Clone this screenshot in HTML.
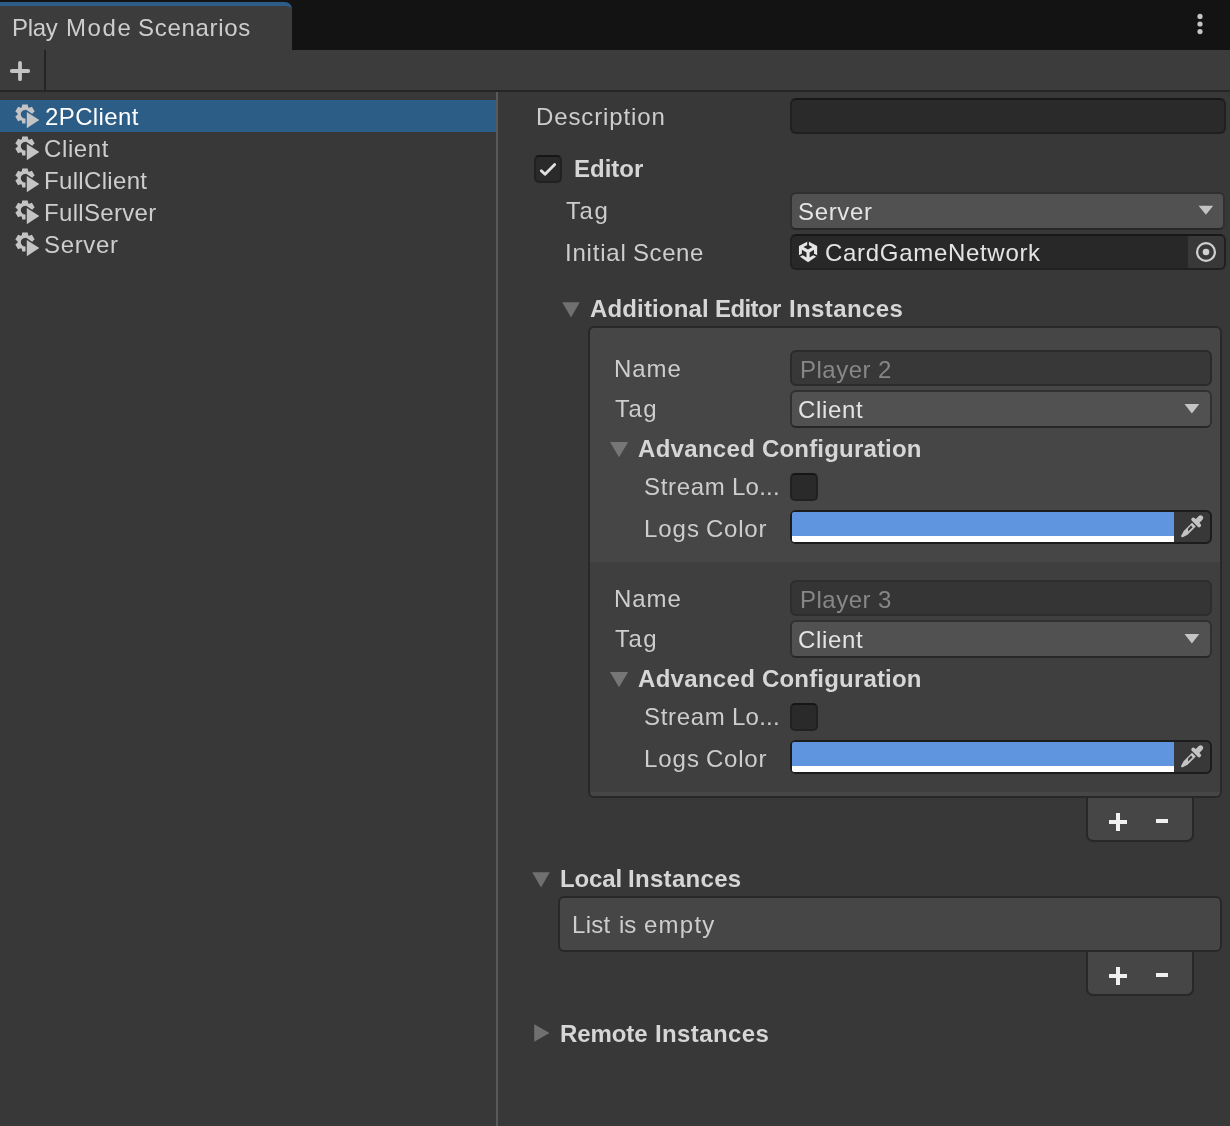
<!DOCTYPE html>
<html><head><meta charset="utf-8"><title>Play Mode Scenarios</title>
<style>
*{box-sizing:border-box;margin:0;padding:0}
html,body{width:1230px;height:1126px;overflow:hidden;background:#383838}
body{position:relative;font-family:"Liberation Sans",sans-serif;font-size:24px;color:#cdcdcd;}
.abs{position:absolute}
.t{position:absolute;display:block;white-space:pre;line-height:32px;height:32px;will-change:transform}
.b{font-weight:bold;color:#d6d6d6}
#hdr{left:0;top:0;width:1230px;height:50px;background:#131313}
#tab{left:0;top:2px;width:292px;height:48px;background:#3c3c3c;border-top:4px solid #2c5d87;border-radius:0 7px 0 0}
#toolbar{left:0;top:50px;width:1230px;height:40px;background:#3c3c3c}
#tbsep{left:44px;top:50px;width:2px;height:40px;background:#242424}
#hline{left:0;top:90px;width:1230px;height:2px;background:#262626}
#vline{left:496px;top:92px;width:2px;height:1034px;background:#595959}
.row{left:0;width:496px;height:32px}
.sel{background:#2c5d87}
.field{background:#2a2a2a;border:2px solid #202020;border-top-color:#181818;border-radius:6px}
.dis{background:#383838;border:2px solid #2b2b2b;border-radius:6px}
.dd{background:#515151;border:2px solid #303030;border-bottom-color:#272727;border-radius:6px}
.box{background:#464646;border:2px solid #282828;border-radius:6px}
.foot{background:#464646;border:2px solid #282828;border-top:none;border-radius:0 0 7px 7px}
.cb{background:#2a2a2a;border:2px solid #212121;border-top-color:#161616;border-radius:5px;width:28px;height:28px}
.item2{background:#3f3f3f}
svg{position:absolute;overflow:visible}
</style></head>
<body>
<div id="hdr" class="abs"></div>
<div id="tab" class="abs"></div>
<div id="toolbar" class="abs"></div>
<div id="tbsep" class="abs"></div>
<div id="hline" class="abs"></div>
<div id="vline" class="abs"></div>
<svg style="left:1190px;top:8px" width="20" height="32"><circle cx="10" cy="8.4" r="2.6" fill="#c4c4c4"/><circle cx="10" cy="16" r="2.6" fill="#c4c4c4"/><circle cx="10" cy="23.6" r="2.6" fill="#c4c4c4"/></svg>
<svg style="left:0;top:50px" width="44" height="40"><path d="M11.8 21H28.2M20 12.8V29.2" stroke="#c4c4c4" stroke-width="3.8" stroke-linecap="round" fill="none"/></svg>
<div class="g"><span class="t" style="left:11.8px;top:12.0px;letter-spacing:-0.307px;">Play </span><span class="t" style="left:65.8px;top:12.0px;letter-spacing:1.596px;">Mode </span><span class="t" style="left:138.0px;top:12.0px;letter-spacing:0.685px;">Scenarios</span></div>
<div class="abs row sel" style="top:100px"></div>
<svg style="left:0;top:100px" width="44" height="32"><path fill-rule="evenodd" fill="#c4c4c4" d="M28.17 7.20 L27.76 4.39 L22.24 4.39 L21.83 7.20 L20.70 7.86 L18.05 6.81 L15.30 11.58 L17.53 13.35 L17.53 14.65 L15.30 16.42 L18.05 21.19 L20.70 20.14 L21.83 20.80 L22.24 23.61 L27.76 23.61 L28.17 20.80 L29.30 20.14 L31.95 21.19 L34.70 16.42 L32.47 14.65 L32.47 13.35 L34.70 11.58 L31.95 6.81 L29.30 7.86Z M29.2 14.2a4.2 4.2 0 1 0 -8.4 0a4.2 4.2 0 1 0 8.4 0Z"/><path d="M26.8 11.9L39.3 20.1L26.8 28.2Z" fill="#c4c4c4" stroke="#2c5d87" stroke-width="2.6" paint-order="stroke" stroke-linejoin="miter"/></svg>
<div class="g"><span class="t" style="left:44.6px;top:101.0px;letter-spacing:0.393px;color:#fff;">2PClient</span></div>
<div class="abs row" style="top:132px"></div>
<svg style="left:0;top:132px" width="44" height="32"><path fill-rule="evenodd" fill="#c4c4c4" d="M28.17 7.20 L27.76 4.39 L22.24 4.39 L21.83 7.20 L20.70 7.86 L18.05 6.81 L15.30 11.58 L17.53 13.35 L17.53 14.65 L15.30 16.42 L18.05 21.19 L20.70 20.14 L21.83 20.80 L22.24 23.61 L27.76 23.61 L28.17 20.80 L29.30 20.14 L31.95 21.19 L34.70 16.42 L32.47 14.65 L32.47 13.35 L34.70 11.58 L31.95 6.81 L29.30 7.86Z M29.2 14.2a4.2 4.2 0 1 0 -8.4 0a4.2 4.2 0 1 0 8.4 0Z"/><path d="M26.8 11.9L39.3 20.1L26.8 28.2Z" fill="#c4c4c4" stroke="#383838" stroke-width="2.6" paint-order="stroke" stroke-linejoin="miter"/></svg>
<div class="g"><span class="t" style="left:44.4px;top:133.0px;letter-spacing:0.622px;">Client</span></div>
<div class="abs row" style="top:164px"></div>
<svg style="left:0;top:164px" width="44" height="32"><path fill-rule="evenodd" fill="#c4c4c4" d="M28.17 7.20 L27.76 4.39 L22.24 4.39 L21.83 7.20 L20.70 7.86 L18.05 6.81 L15.30 11.58 L17.53 13.35 L17.53 14.65 L15.30 16.42 L18.05 21.19 L20.70 20.14 L21.83 20.80 L22.24 23.61 L27.76 23.61 L28.17 20.80 L29.30 20.14 L31.95 21.19 L34.70 16.42 L32.47 14.65 L32.47 13.35 L34.70 11.58 L31.95 6.81 L29.30 7.86Z M29.2 14.2a4.2 4.2 0 1 0 -8.4 0a4.2 4.2 0 1 0 8.4 0Z"/><path d="M26.8 11.9L39.3 20.1L26.8 28.2Z" fill="#c4c4c4" stroke="#383838" stroke-width="2.6" paint-order="stroke" stroke-linejoin="miter"/></svg>
<div class="g"><span class="t" style="left:44.0px;top:165.0px;letter-spacing:0.334px;">FullClient</span></div>
<div class="abs row" style="top:196px"></div>
<svg style="left:0;top:196px" width="44" height="32"><path fill-rule="evenodd" fill="#c4c4c4" d="M28.17 7.20 L27.76 4.39 L22.24 4.39 L21.83 7.20 L20.70 7.86 L18.05 6.81 L15.30 11.58 L17.53 13.35 L17.53 14.65 L15.30 16.42 L18.05 21.19 L20.70 20.14 L21.83 20.80 L22.24 23.61 L27.76 23.61 L28.17 20.80 L29.30 20.14 L31.95 21.19 L34.70 16.42 L32.47 14.65 L32.47 13.35 L34.70 11.58 L31.95 6.81 L29.30 7.86Z M29.2 14.2a4.2 4.2 0 1 0 -8.4 0a4.2 4.2 0 1 0 8.4 0Z"/><path d="M26.8 11.9L39.3 20.1L26.8 28.2Z" fill="#c4c4c4" stroke="#383838" stroke-width="2.6" paint-order="stroke" stroke-linejoin="miter"/></svg>
<div class="g"><span class="t" style="left:44.0px;top:197.0px;letter-spacing:0.311px;">FullServer</span></div>
<div class="abs row" style="top:228px"></div>
<svg style="left:0;top:228px" width="44" height="32"><path fill-rule="evenodd" fill="#c4c4c4" d="M28.17 7.20 L27.76 4.39 L22.24 4.39 L21.83 7.20 L20.70 7.86 L18.05 6.81 L15.30 11.58 L17.53 13.35 L17.53 14.65 L15.30 16.42 L18.05 21.19 L20.70 20.14 L21.83 20.80 L22.24 23.61 L27.76 23.61 L28.17 20.80 L29.30 20.14 L31.95 21.19 L34.70 16.42 L32.47 14.65 L32.47 13.35 L34.70 11.58 L31.95 6.81 L29.30 7.86Z M29.2 14.2a4.2 4.2 0 1 0 -8.4 0a4.2 4.2 0 1 0 8.4 0Z"/><path d="M26.8 11.9L39.3 20.1L26.8 28.2Z" fill="#c4c4c4" stroke="#383838" stroke-width="2.6" paint-order="stroke" stroke-linejoin="miter"/></svg>
<div class="g"><span class="t" style="left:44.4px;top:229.0px;letter-spacing:0.663px;">Server</span></div>
<div class="g"><span class="t" style="left:535.6px;top:101.0px;letter-spacing:0.887px;">Description</span></div>
<div class="abs field" style="left:790px;top:98px;width:436px;height:36px"></div>
<div class="abs cb" style="left:534px;top:155px"></div>
<svg style="left:534px;top:155px" width="28" height="28"><path d="M7.3 15.7L11 19.3L20.7 9.5" stroke="#e2e2e2" stroke-width="2.8" fill="none" stroke-linecap="round" stroke-linejoin="round"/></svg>
<div class="g"><span class="t b" style="left:574.0px;top:153.0px;letter-spacing:-0.004px;">Editor</span></div>
<div class="g"><span class="t" style="left:566.1px;top:195.0px;letter-spacing:1.578px;">Tag</span></div>
<div class="abs dd" style="left:790px;top:192px;width:435px;height:38px"></div>
<svg style="left:1198px;top:205px" width="16" height="10"><path d="M0.6 0.8H15.2L7.9 9.8Z" fill="#c4c4c4"/></svg>
<div class="g"><span class="t" style="left:798.0px;top:196.0px;letter-spacing:0.674px;color:#e4e4e4;">Server</span></div>
<div class="g"><span class="t" style="left:565.4px;top:237.0px;letter-spacing:0.784px;">Initial </span><span class="t" style="left:632.8px;top:237.0px;letter-spacing:0.574px;">Scene</span></div>
<div class="abs field" style="left:790px;top:234px;width:436px;height:36px;background:#282828"></div>
<div class="abs" style="left:1188px;top:236px;width:36px;height:32px;background:#383838;border-radius:0 4px 4px 0"></div>
<svg style="left:1188px;top:236px" width="36" height="32"><circle cx="18" cy="16" r="8.9" fill="none" stroke="#d0d0d0" stroke-width="2.2"/><circle cx="18" cy="16" r="3.3" fill="#d0d0d0"/></svg>
<svg style="left:792px;top:236px" width="32" height="32"><path fill="#e6e6e6" d="M16.05 5.25L25.15 9.95V19.9L16.05 26.15L6.96 19.9V9.95Z"/><g fill="#282828"><path d="M11.4 10.9L16.05 8.7L20.4 10.9L16.0 13.5Z"/><path d="M15.2 5H16.9V10H15.2Z"/><path d="M9.9 13.8L14.5 16.5V21.6L9.9 18.8Z"/><path d="M17.6 16.5L22.0 13.8V18.8L17.6 21.6Z"/><path d="M6.4 19.4L10.3 17.6L10.6 19.2L7.2 20.9Z"/><path d="M25.7 19.4L21.6 17.6L21.3 19.2L24.9 20.9Z"/></g></svg>
<div class="g"><span class="t" style="left:825.0px;top:237.0px;letter-spacing:0.694px;color:#e4e4e4;">CardGameNetwork</span></div>
<svg style="left:562px;top:302px" width="18" height="16"><path d="M0.2 0.2H17.8L9 15.6Z" fill="#707070"/></svg>
<div class="g"><span class="t b" style="left:590.1px;top:293.0px;letter-spacing:0.143px;">Additional </span><span class="t b" style="left:715.3px;top:293.0px;letter-spacing:-0.604px;">Editor </span><span class="t b" style="left:788.6px;top:293.0px;letter-spacing:0.376px;">Instances</span></div>
<div class="abs foot" style="left:1086px;top:794px;width:108px;height:48px"></div>
<div class="abs box" style="left:588px;top:326px;width:634px;height:472px"></div>
<div class="abs item2" style="left:590px;top:562px;width:630px;height:230px"></div>
<div class="g"><span class="t" style="left:613.7px;top:353.0px;letter-spacing:0.959px;">Name</span></div>
<div class="abs dis" style="left:790px;top:350px;width:422px;height:36px"></div>
<div class="g"><span class="t" style="left:800.2px;top:354.0px;letter-spacing:0.505px;color:#878787;">Player </span><span class="t" style="left:878.0px;top:354.0px;color:#878787;">2</span></div>
<div class="g"><span class="t" style="left:614.7px;top:393.0px;letter-spacing:1.426px;">Tag</span></div>
<div class="abs dd" style="left:790px;top:390px;width:422px;height:38px"></div>
<svg style="left:1184px;top:404px" width="16" height="10"><path d="M0.5 0H15.3L7.9 9.4Z" fill="#c4c4c4"/></svg>
<div class="g"><span class="t" style="left:798.4px;top:394.0px;letter-spacing:0.662px;color:#e4e4e4;">Client</span></div>
<svg style="left:609px;top:442px" width="20" height="16"><path d="M1 0H19.1L10.05 15.3Z" fill="#767676"/></svg>
<div class="g"><span class="t b" style="left:638.3px;top:433.0px;letter-spacing:0.3px;">Advanced </span><span class="t b" style="left:761.8px;top:433.0px;letter-spacing:0.18px;">Configuration</span></div>
<div class="g"><span class="t" style="left:643.6px;top:471.0px;letter-spacing:0.687px;">Stream </span><span class="t" style="left:731.6px;top:471.0px;letter-spacing:0.233px;">Lo...</span></div>
<div class="abs cb" style="left:790px;top:473px"></div>
<div class="g"><span class="t" style="left:643.6px;top:513.0px;letter-spacing:0.946px;">Logs </span><span class="t" style="left:705.8px;top:513.0px;letter-spacing:0.76px;">Color</span></div>
<div class="abs" style="left:790px;top:510px;width:422px;height:34px;background:#383838;border:2px solid #1c1c1c;border-radius:6px"></div>
<div class="abs" style="left:792px;top:512px;width:382px;height:24px;background:#5f95df;border-radius:2px 0 0 0"></div>
<div class="abs" style="left:792px;top:536px;width:382px;height:6px;background:#fff;border-radius:0 0 0 2px"></div>
<svg style="left:1174px;top:510px" width="36" height="32"><g transform="translate(29,5.5) rotate(45)" fill="#c4c4c4"><rect x="-2.6" y="0.8" width="5.2" height="10" rx="2.6"/><rect x="-6" y="7.8" width="12.2" height="3.9" rx="1.9"/><path d="M-2.7 12.9H2.7V24.5L1.1 29.8Q0 31.2 -1.1 29.8L-2.7 24.5Z"/><path d="M-1.3 15.6H0.9V21.9L-1.3 19.9Z" fill="#383838"/></g></svg>
<div class="g"><span class="t" style="left:613.7px;top:583.0px;letter-spacing:0.957px;">Name</span></div>
<div class="abs dis" style="left:790px;top:580px;width:422px;height:36px;background:#353535;border-color:#2d2d2d"></div>
<div class="g"><span class="t" style="left:800.2px;top:584.0px;letter-spacing:0.506px;color:#878787;">Player </span><span class="t" style="left:878.0px;top:584.0px;color:#878787;">3</span></div>
<div class="g"><span class="t" style="left:614.7px;top:623.0px;letter-spacing:1.428px;">Tag</span></div>
<div class="abs dd" style="left:790px;top:620px;width:422px;height:38px"></div>
<svg style="left:1184px;top:634px" width="16" height="10"><path d="M0.5 0H15.3L7.9 9.4Z" fill="#c4c4c4"/></svg>
<div class="g"><span class="t" style="left:798.4px;top:624.0px;letter-spacing:0.662px;color:#e4e4e4;">Client</span></div>
<svg style="left:609px;top:672px" width="20" height="16"><path d="M1 0H19.1L10.05 15.3Z" fill="#767676"/></svg>
<div class="g"><span class="t b" style="left:638.3px;top:663.0px;letter-spacing:0.3px;">Advanced </span><span class="t b" style="left:761.8px;top:663.0px;letter-spacing:0.18px;">Configuration</span></div>
<div class="g"><span class="t" style="left:643.6px;top:701.0px;letter-spacing:0.687px;">Stream </span><span class="t" style="left:731.6px;top:701.0px;letter-spacing:0.233px;">Lo...</span></div>
<div class="abs cb" style="left:790px;top:703px"></div>
<div class="g"><span class="t" style="left:643.6px;top:743.0px;letter-spacing:0.946px;">Logs </span><span class="t" style="left:705.8px;top:743.0px;letter-spacing:0.76px;">Color</span></div>
<div class="abs" style="left:790px;top:740px;width:422px;height:34px;background:#383838;border:2px solid #1c1c1c;border-radius:6px"></div>
<div class="abs" style="left:792px;top:742px;width:382px;height:24px;background:#5f95df;border-radius:2px 0 0 0"></div>
<div class="abs" style="left:792px;top:766px;width:382px;height:6px;background:#fff;border-radius:0 0 0 2px"></div>
<svg style="left:1174px;top:740px" width="36" height="32"><g transform="translate(29,5.5) rotate(45)" fill="#c4c4c4"><rect x="-2.6" y="0.8" width="5.2" height="10" rx="2.6"/><rect x="-6" y="7.8" width="12.2" height="3.9" rx="1.9"/><path d="M-2.7 12.9H2.7V24.5L1.1 29.8Q0 31.2 -1.1 29.8L-2.7 24.5Z"/><path d="M-1.3 15.6H0.9V21.9L-1.3 19.9Z" fill="#383838"/></g></svg>
<svg style="left:1086px;top:798px" width="108" height="44"><path d="M23 22h18v4h-18zM30 15h4v18h-4z" fill="#f0f0f0"/><path d="M70 21h12v4h-12z" fill="#f0f0f0"/></svg>
<svg style="left:532px;top:872px" width="18" height="16"><path d="M0.2 0.2H17.8L9 15.6Z" fill="#707070"/></svg>
<div class="g"><span class="t b" style="left:560.2px;top:863.0px;letter-spacing:-0.112px;">Local </span><span class="t b" style="left:628.0px;top:863.0px;letter-spacing:0.31px;">Instances</span></div>
<div class="abs foot" style="left:1086px;top:948px;width:108px;height:48px"></div>
<div class="abs box" style="left:558px;top:896px;width:664px;height:56px"></div>
<div class="g"><span class="t" style="left:571.8px;top:909.0px;letter-spacing:0.294px;">List </span><span class="t" style="left:619.0px;top:909.0px;letter-spacing:-0.162px;">is </span><span class="t" style="left:644.2px;top:909.0px;letter-spacing:1.246px;">empty</span></div>
<svg style="left:1086px;top:952px" width="108" height="44"><path d="M23 22h18v4h-18zM30 15h4v18h-4z" fill="#f0f0f0"/><path d="M70 21h12v4h-12z" fill="#f0f0f0"/></svg>
<svg style="left:534px;top:1024px" width="16" height="18"><path d="M0.2 0.3L15.5 9L0.2 17.8Z" fill="#707070"/></svg>
<div class="g"><span class="t b" style="left:560.2px;top:1018.0px;letter-spacing:-0.1px;">Remote </span><span class="t b" style="left:654.8px;top:1018.0px;letter-spacing:0.376px;">Instances</span></div>
</body></html>
